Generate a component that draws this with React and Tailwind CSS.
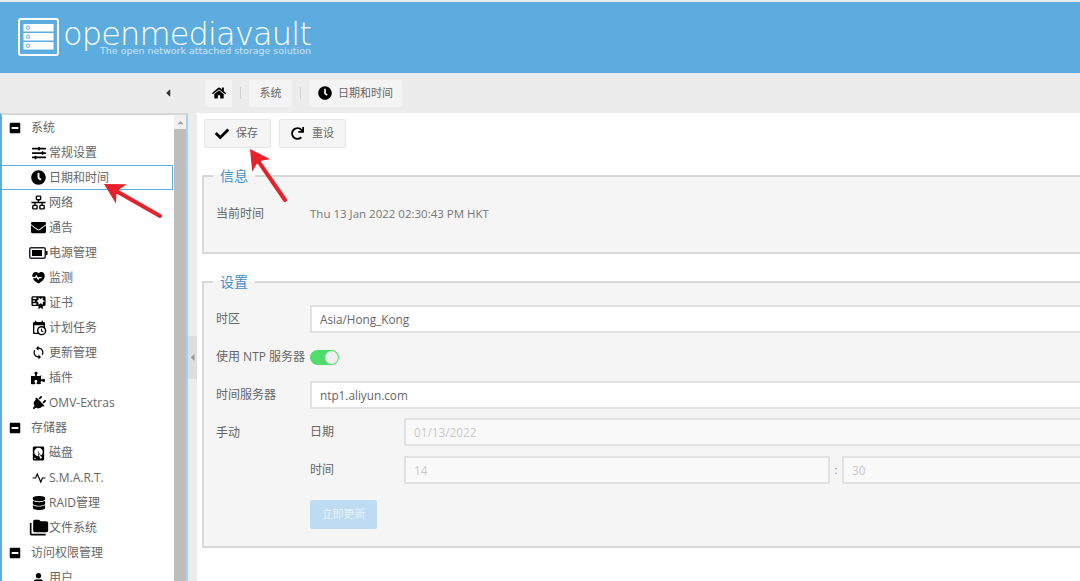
import { FaHome, FaCheck, FaRedo, FaClock, FaSlidersH, FaEnvelope, FaPuzzlePiece, FaPlug, FaDatabase, FaUser, FaMinusSquare, FaCaretLeft, FaCaretUp } from "react-icons/fa";
import { MdSync, MdFolderCopy } from "react-icons/md";
import { RiHeartPulseFill, RiPulseLine } from "react-icons/ri";

const font = "font-['Open_Sans','Noto_Sans_CJK_SC',sans-serif]";

// material design icons, not all of them are in the packages
function Mdi({ d, size = 16 }) {
  return (
    <svg width={size} height={size} viewBox="0 0 24 24" fill="currentColor" className="shrink-0">
      <path d={d} />
    </svg>
  );
}

const lan = "M10,2C8.89,2 8,2.89 8,4V7C8,8.11 8.89,9 10,9H11V11H2V13H6V15H5C3.89,15 3,15.89 3,17V20C3,21.11 3.89,22 5,22H9C10.11,22 11,21.11 11,20V17C11,15.89 10.11,15 9,15H8V13H16V15H15C13.89,15 13,15.89 13,17V20C13,21.11 13.89,22 15,22H19C20.11,22 21,21.11 21,20V17C21,15.89 20.11,15 19,15H18V13H22V11H13V9H14C15.11,9 16,8.11 16,7V4C16,2.89 15.11,2 14,2H10M10,4H14V7H10V4M5,17H9V20H5V17M15,17H19V20H15V17Z";
const certificate = "M4,3C2.89,3 2,3.89 2,5V15A2,2 0 0,0 4,17H12V22L15,19L18,22V17H20A2,2 0 0,0 22,15V8L22,6V5A2,2 0 0,0 20,3H16V3H4M12,5L15,7L18,5V8.5L21,10L18,11.5V15L15,13L12,15V11.5L9,10L12,8.5V5M4,5H9V7H4V5M4,9H7V11H4V9M4,13H9V15H4V13Z";
const calendarClock = "M15,13H16.5V15.82L18.94,17.23L18.19,18.53L15,16.69V13M19,8H5V19H9.67C9.24,18.09 9,17.07 9,16A7,7 0 0,1 16,9C17.07,9 18.09,9.24 19,9.67V8M5,21C3.89,21 3,20.1 3,19V5C3,3.89 3.89,3 5,3H6V1H8V3H16V1H18V3H19A2,2 0 0,1 21,5V11.1C22.24,12.36 23,14.09 23,16A7,7 0 0,1 16,23C14.09,23 12.36,22.24 11.1,21H5M16,11.15A4.85,4.85 0 0,0 11.15,16C11.15,18.68 13.32,20.85 16,20.85A4.85,4.85 0 0,0 20.85,16C20.85,13.32 18.68,11.15 16,11.15Z";
const harddisk = "M6,2H18A2,2 0 0,1 20,4V20A2,2 0 0,1 18,22H6A2,2 0 0,1 4,20V4A2,2 0 0,1 6,2M12,4A6,6 0 0,0 6,10C6,13.31 8.69,16 12.1,16L11.22,13.77C10.95,13.29 11.11,12.68 11.59,12.4L12.45,11.9C12.93,11.63 13.54,11.79 13.82,12.27L15.74,14.69C17.12,13.59 18,11.9 18,10A6,6 0 0,0 12,4M12,9A1,1 0 0,1 13,10A1,1 0 0,1 12,11A1,1 0 0,1 11,10A1,1 0 0,1 12,9M7,18A1,1 0 0,0 6,19A1,1 0 0,0 7,20A1,1 0 0,0 8,19A1,1 0 0,0 7,18M12.09,13.27L14.58,19.58L17.17,18.08L12.95,12.77L12.09,13.27Z";

function Battery() {
  return (
    <svg width="19" height="12" viewBox="0 0 19 12" className="shrink-0 -ml-[3px]">
      <rect x="0.75" y="0.75" width="15.5" height="10.5" rx="1.5" fill="none" stroke="#2a2033" strokeWidth="1.5" />
      <rect x="3" y="3" width="10" height="6" fill="#000" />
      <rect x="17" y="4" width="1.5" height="4" fill="#000" />
    </svg>
  );
}

const menu = [
  { group: "系统" },
  { label: "常规设置", icon: <FaSlidersH className="w-[14px] h-[14px]" /> },
  { label: "日期和时间", icon: <FaClock className="w-[15px] h-[15px]" />, active: true },
  { label: "网络", icon: <Mdi d={lan} size={17} /> },
  { label: "通告", icon: <FaEnvelope className="w-[15px] h-[15px]" /> },
  { label: "电源管理", icon: <Battery />, tight: true },
  { label: "监测", icon: <RiHeartPulseFill className="w-[17px] h-[17px]" /> },
  { label: "证书", icon: <Mdi d={certificate} size={17} /> },
  { label: "计划任务", icon: <Mdi d={calendarClock} size={16} /> },
  { label: "更新管理", icon: <MdSync className="w-[17px] h-[17px]" /> },
  { label: "插件", icon: <FaPuzzlePiece className="w-[14px] h-[14px] -ml-[2px]" /> },
  { label: "OMV-Extras", icon: <FaPlug className="w-[15px] h-[15px] rotate-45" /> },
  { group: "存储器" },
  { label: "磁盘", icon: <Mdi d={harddisk} size={17} /> },
  { label: "S.M.A.R.T.", icon: <RiPulseLine className="w-[14px] h-[14px]" /> },
  { label: "RAID管理", icon: <FaDatabase className="w-[14px] h-[14px]" /> },
  { label: "文件系统", icon: <MdFolderCopy className="w-[20px] h-[20px] -ml-[2px]" />, tight: true },
  { group: "访问权限管理" },
  { label: "用户", icon: <FaUser className="w-[11px] h-[11px]" /> },
];

function Logo() {
  return (
    <svg width="42" height="38" viewBox="0 0 42 38" className="shrink-0">
      <rect x="1" y="1" width="39" height="36" rx="2" fill="none" stroke="#fff" strokeWidth="2" />
      {[6, 15, 24].map((y) => (
        <g key={y}>
          <rect x="5.5" y={y} width="30" height="7.5" fill="#fff" />
          <circle cx="10" cy={y + 3.7} r="1.7" fill="none" stroke="#5dace0" strokeWidth="1" />
        </g>
      ))}
    </svg>
  );
}

function Crumb({ children, className }) {
  return (
    <div className={`h-[27px] flex items-center justify-center bg-[#f4f4f4] rounded-[2px] text-[11px] text-[#666] ${className}`}>
      {children}
    </div>
  );
}

function Sep() {
  return <div className="w-px h-[12px] mx-[8px] bg-[#d4d4d4]" />;
}

function MenuRow({ item }) {
  if (item.group) {
    return (
      <div className="h-[25.05px] flex items-center pl-[7px] text-[12px] text-[#666]">
        <FaMinusSquare className="w-[12px] h-[12px] text-black mr-[10px]" />
        {item.group}
      </div>
    );
  }
  return (
    <div className={`h-[25.05px] -ml-[1px] flex items-center pl-[29px] text-[12px] text-[#666] border ${item.active ? "border-[#5dace0]" : "border-transparent"}`}>
      <span className={`flex shrink-0 items-center justify-center text-black ${item.tight ? "w-[18px]" : "w-[15px] mr-[3px]"}`}>{item.icon}</span>
      {item.label}
    </div>
  );
}

function Sidebar() {
  return (
    <aside className="w-[188px] shrink-0 flex border-l-2 border-r-2 border-t-2 border-l-[#5dace0] border-r-[#a9d2ee] border-t-[#d8d8d8] bg-white overflow-hidden">
      <div className="w-[171px] shrink-0">
        {menu.map((item) => (
          <MenuRow key={item.label || item.group} item={item} />
        ))}
      </div>
      <div className="flex-1 flex flex-col items-center bg-[#f1f1f1] ml-[1px]">
        <div className="h-[14px] flex items-center justify-center text-[#a3a3a3]">
          <FaCaretUp className="w-[9px] h-[9px]" />
        </div>
        <div className="flex-1 w-full bg-[#bdbdbd]" />
      </div>
    </aside>
  );
}

function Row({ label, children, className }) {
  return (
    <div className={`flex items-center ${className}`}>
      <div className="w-[94px] shrink-0 text-[12px] text-[#666]">{label}</div>
      {children}
    </div>
  );
}

function TextInput({ value, disabled, className }) {
  return (
    <input
      readOnly
      value={value}
      className={`h-[28px] border-2 px-[8px] text-[11.75px] outline-none ${font} ${
        disabled ? "bg-[#f9f9f9] border-[#e2e2e2] text-[#c9c9c9]" : "bg-white border-[#e2e2e2] text-[#666]"
      } ${className}`}
    />
  );
}

function Fieldset({ title, className, children }) {
  return (
    <fieldset className={`w-[1000px] ml-[5px] border-2 border-[#d8d8d8] bg-[#f5f5f5] pl-[12px] ${className}`}>
      <legend className="-ml-[3px] px-[7px] text-[14px] leading-[20px] text-[#3f8fca]">{title}</legend>
      {children}
    </fieldset>
  );
}

function Arrow({ x1, y1, x2, y2 }) {
  const a = Math.atan2(y1 - y2, x1 - x2);
  const pt = (d, o) => `${x2 + Math.cos(a) * d - Math.sin(a) * o},${y2 + Math.sin(a) * d + Math.cos(a) * o}`;
  return (
    <g fill="#e8202a">
      <polygon points={`${pt(0, 0)} ${pt(20, 11)} ${pt(16, 3)} ${pt(16, -3)} ${pt(20, -11)}`} />
      <line x1={x1} y1={y1} x2={x2 + Math.cos(a) * 14} y2={y2 + Math.sin(a) * 14} stroke="#e8202a" strokeWidth="4" strokeLinecap="round" />
    </g>
  );
}

export default function App() {
  return (
    <div className={`relative w-[1080px] h-[581px] overflow-hidden flex flex-col bg-white ${font}`}>
      <div className="h-[2px] bg-[#e4eaee]" />
      <header className="h-[71px] shrink-0 bg-[#5dace0] flex items-center pl-[18px] pb-[1px]">
        <Logo />
        <div className="ml-[3px] w-[250px] relative h-[40px]">
          <div className="font-['DejaVu_Sans'] font-extralight text-[32px] leading-[40px] text-white tracking-[-0.85px] -mt-[3px]">
            openmediavault
          </div>
          <div className="absolute left-[37px] top-[27px] whitespace-nowrap font-['DejaVu_Sans'] text-[9.5px] text-[#cbe4f6]">
            The open network attached storage solution
          </div>
        </div>
      </header>

      <div className="h-[40px] shrink-0 bg-[#ececec] flex items-center">
        <div className="w-[205px] flex justify-end pr-[31px]">
          <FaCaretLeft className="w-[12px] h-[12px] text-[#333]" />
        </div>
        <Crumb className="w-[27px]">
          <FaHome className="w-[14px] h-[14px] text-black" />
        </Crumb>
        <Sep />
        <Crumb className="w-[43px]">系统</Crumb>
        <Sep />
        <Crumb className="w-[93px] gap-[6px]">
          <FaClock className="w-[14px] h-[14px] text-black" />
          日期和时间
        </Crumb>
      </div>

      <div className="flex-1 flex min-h-0">
        <Sidebar />
        <div className="w-[9px] shrink-0 bg-[#ececec] flex items-center">
          <div className="w-full h-[43px] mt-[20px] bg-[#dedede] flex items-center justify-center">
            <FaCaretLeft className="w-[11px] h-[11px] text-[#999]" />
          </div>
        </div>
        <main className="flex-1 min-w-0 overflow-hidden pt-[6px]">
          <div className="flex gap-[8px] pl-[7px] pb-[18px]">
            <button className="w-[67px] h-[29px] flex items-center justify-center gap-[7px] bg-[#f5f5f5] border border-[#e6e6e6] rounded-[2px] text-[11px] text-[#666] pr-[2px]">
              <FaCheck className="w-[14px] h-[14px] text-black" />
              保存
            </button>
            <button className="w-[67px] h-[29px] flex items-center justify-center gap-[8px] bg-[#f5f5f5] border border-[#e6e6e6] rounded-[2px] text-[11px] text-[#666]">
              <FaRedo className="w-[13px] h-[13px] text-black" />
              重设
            </button>
          </div>

          <Fieldset title="信息" className="h-[88px]">
            <Row label="当前时间" className="mt-[19px]">
              <span className="text-[11.5px] text-[#777]">Thu 13 Jan 2022 02:30:43 PM HKT</span>
            </Row>
          </Fieldset>

          <Fieldset title="设置" className="mt-[18px] h-[276px] pb-[16px]">
            <Row label="时区" className="mt-[13px]">
              <TextInput value="Asia/Hong_Kong" className="flex-1" />
            </Row>
            <Row label="使用 NTP 服务器" className="mt-[15px]">
              <div className="w-[29px] h-[15px] rounded-full bg-[#4fdc6c] flex items-center justify-end pr-[1px]">
                <div className="w-[13px] h-[13px] rounded-full bg-[#eeeeee]" />
              </div>
            </Row>
            <Row label="时间服务器" className="mt-[15px]">
              <TextInput value="ntp1.aliyun.com" className="flex-1" />
            </Row>
            <div className="flex mt-[9px]">
              <div className="w-[94px] shrink-0 text-[12px] text-[#666] pt-[6px]">手动</div>
              <div className="flex-1">
                <div className="flex items-center">
                  <div className="w-[94px] shrink-0 text-[12px] text-[#666]">日期</div>
                  <TextInput disabled value="01/13/2022" className="flex-1" />
                </div>
                <div className="flex items-center mt-[10px]">
                  <div className="w-[94px] shrink-0 text-[12px] text-[#666]">时间</div>
                  <TextInput disabled value="14" className="w-[426px]" />
                  <span className="w-[12px] text-center text-[11px] text-[#888]">:</span>
                  <TextInput disabled value="30" className="flex-1" />
                </div>
                <button className="mt-[16px] w-[67px] h-[29px] bg-[#bddcf1] rounded-[2px] text-[11px] text-[#e4f1fa]">立即更新</button>
              </div>
            </div>
          </Fieldset>
        </main>
      </div>

      <svg width="1080" height="581" className="absolute inset-0 pointer-events-none">
        <Arrow x1={160} y1={216} x2={104} y2={184} />
        <Arrow x1={285} y1={200} x2={250} y2={149} />
      </svg>
    </div>
  );
}
